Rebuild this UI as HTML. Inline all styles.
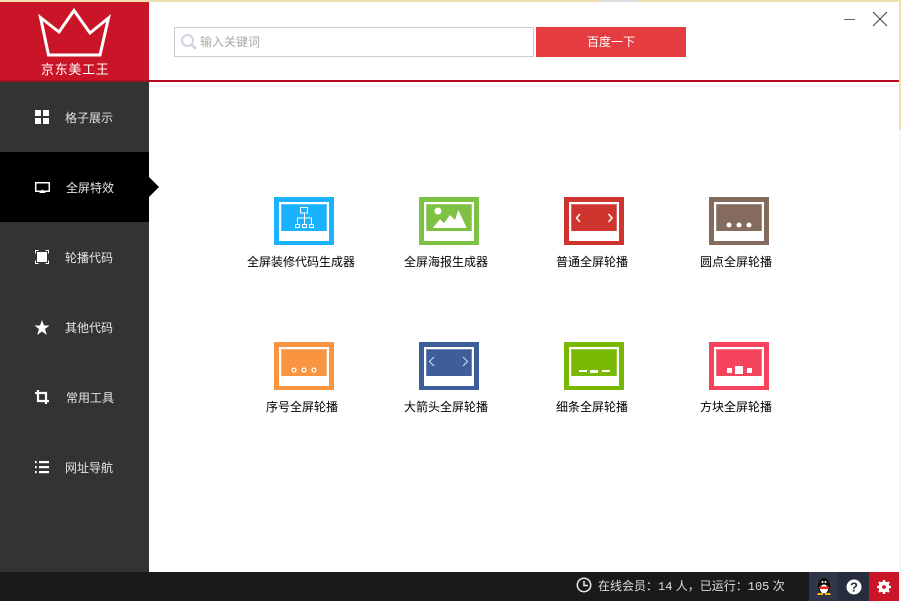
<!DOCTYPE html>
<html lang="zh"><head><meta charset="utf-8"><title>京东美工王</title>
<style>
*{margin:0;padding:0;box-sizing:border-box}
html,body{width:901px;height:601px;overflow:hidden;background:#f7f7f7}
body{position:relative;font:12px "WenQuanYi Zen Hei","Liberation Sans","Noto Sans CJK SC",sans-serif}
.a{position:absolute}
#top{left:0;top:0;width:901px;height:2px;background:#f0e0b0}
#topg{left:600px;top:0;width:37px;height:2px;background:#ddd}
#rs{left:899px;top:0;width:2px;height:130px;background:#f0e0b0}
#win{left:0;top:2px;width:899px;height:599px;background:#fff}
#logo{left:0;top:2px;width:149px;height:78px;background:#c91527}
#ln{left:149px;top:80px;width:750px;height:2px;background:#b8091c}
#ll{left:0;top:80px;width:149px;height:2px;background:#a5121f}
#side{left:0;top:82px;width:149px;height:490px;background:#333}
#act{left:0;top:152px;width:149px;height:70px;background:#000}
#arr{left:149px;top:177px;width:0;height:0;border-left:10px solid #000;border-top:10px solid transparent;border-bottom:10px solid transparent}
.m{left:65px;width:60px;color:#e4e4e4;line-height:14px;white-space:nowrap}
.mi{left:34px;width:16px;height:16px}
#lt{left:41px;top:62px;width:72px;color:#fff;font-size:13px;letter-spacing:.7px;line-height:15px;white-space:nowrap}
#search{left:174px;top:27px;width:360px;height:30px;border:1px solid #ccc;background:#fff}
#ph{left:200px;top:35px;color:#a8a8a8;line-height:14px}
#btn{left:536px;top:27px;width:150px;height:30px;background:#e53c3f;color:#fff;text-align:center;line-height:30px}
.t{width:60px;height:48px}
.t i{position:absolute;left:5px;top:5px;width:50px;height:39px;background:#fff}
.t b{position:absolute;left:7px;top:7px;width:46px;height:27px;border:1px solid rgba(255,255,255,.25);border-bottom:0}
.t svg{position:absolute;left:0;top:0}
.c{width:130px;text-align:center;color:#000;line-height:14px;white-space:nowrap}
#bar{left:0;top:572px;width:899px;height:29px;background:#1a1a1a}
#st{left:598px;top:579px;color:#ddd;line-height:14px;white-space:nowrap}
#st span{font-family:"Liberation Mono",monospace}
</style></head><body>
<div class="a" id="top"></div><div class="a" id="topg"></div><div class="a" id="rs"></div>
<div class="a" id="win"></div>
<div class="a" id="logo"></div><div class="a" id="ll"></div><div class="a" id="ln"></div>
<svg class="a" style="left:30px;top:0" width="90" height="62"><path d="M10.500 17.500 29 32 44 10.500 60 33 78.500 18 70 55H18.500Z" fill="none" stroke="#fff" stroke-width="3"/></svg>
<div class="a" id="lt">京东美工王</div>

<div class="a" id="search"></div>
<svg class="a" style="left:180px;top:33px" width="18" height="18"><circle cx="7.500" cy="7.500" r="5.500" fill="none" stroke="#cdd5e2" stroke-width="2"/><path d="M11.500 11.500 16 16" stroke="#cdd5e2" stroke-width="2.500"/></svg>
<div class="a" id="ph">输入关键词</div>
<div class="a" id="btn">百度一下</div>
<svg class="a" style="left:840px;top:8px" width="50" height="22"><path d="M4 11.500H15" stroke="#666" stroke-width="1"/><path d="M33 4 47 18M47 4 33 18" stroke="#4a5060" stroke-width="1.200"/></svg>

<div class="a" id="side"></div><div class="a" id="act"></div><div class="a" id="arr"></div>
<svg class="a mi" style="top:109px" viewBox="0 0 16 16" fill="#fff"><rect x="1" y="1" width="6" height="6"/><rect x="9" y="1" width="6" height="6"/><rect x="1" y="9" width="6" height="6"/><rect x="9" y="9" width="6" height="6"/></svg>
<div class="a m" style="top:111px">格子展示</div>
<svg class="a mi" style="top:180px" viewBox="0 0 16 16"><path d="M1.700 2.700H15.300V11.300H1.700Z" fill="none" stroke="#fff" stroke-width="1.500"/><path d="M5 13 8.500 9.500 12 13Z" fill="#fff"/></svg>
<div class="a m" style="top:181px;left:66px">全屏特效</div>
<svg class="a mi" style="top:249px" viewBox="0 0 16 16"><rect x="3" y="3" width="10" height="10" fill="#fff"/><path d="M1.500 4.500V1.500H4.500M11.500 1.500H14.500V4.500M14.500 11.500V14.500H11.500M4.500 14.500H1.500V11.500" fill="none" stroke="#fff"/></svg>
<div class="a m" style="top:251px">轮播代码</div>
<svg class="a mi" style="top:320px" viewBox="0 0 16 16"><path d="M8 0 10 5.500H15.500L11 9 12.800 15 8 11.500 3.200 15 5 9 .5 5.500H6Z" fill="#fff"/></svg>
<div class="a m" style="top:321px">其他代码</div>
<svg class="a mi" style="top:390px" viewBox="0 0 16 16"><path d="M4 0V11H15M1 3H12V14" fill="none" stroke="#fff" stroke-width="2.200"/></svg>
<div class="a m" style="top:391px;left:66px">常用工具</div>
<svg class="a mi" style="top:460px" viewBox="0 0 16 16" fill="#fff"><rect x="1" y="1" width="1.700" height="2.200"/><rect x="1" y="6" width="1.700" height="2.200"/><rect x="1" y="11" width="1.700" height="2.200"/><rect x="5" y="1" width="10" height="2.200"/><rect x="5" y="6" width="10" height="2.200"/><rect x="5" y="11" width="10" height="2.200"/></svg>
<div class="a m" style="top:461px">网址导航</div>

<div class="a t" style="left:274px;top:197px;background:#1ab2ff"><i></i><b style="background:#1ab2ff"></b>
<svg width="60" height="48" fill="none" stroke="#fff"><path d="M26.500 10.500h7v5.500h-7zM30.500 16v5M23.500 27v-6h14v6M30.500 21v6M21.500 27.500h4v3h-4zM28.500 27.500h4v3h-4zM35.500 27.500h4v3h-4z"/></svg></div>
<div class="a t" style="left:419px;top:197px;background:#7dc242"><i></i><b style="background:#7dc242"></b>
<svg width="60" height="48" fill="#fff"><circle cx="19" cy="14" r="3.500"/><path d="M13.700 31 21 22.300 25 26.300 31 18 36 23 39.300 13 47.700 31Z"/></svg></div>
<div class="a t" style="left:564px;top:197px;background:#cf342f"><i></i><b style="background:#cf342f"></b>
<svg width="60" height="48" fill="none" stroke="#fff" stroke-width="1.500"><path d="M16 17 12.500 21 16 25M44.500 17 48 21 44.500 25"/></svg></div>
<div class="a t" style="left:709px;top:197px;background:#856b5d"><i></i><b style="background:#856b5d"></b>
<svg width="60" height="48" fill="#fff"><circle cx="20" cy="28" r="2.500"/><circle cx="30" cy="28" r="2.500"/><circle cx="40" cy="28" r="2.500"/></svg></div>

<div class="a c" style="left:236px;top:255px">全屏装修代码生成器</div>
<div class="a c" style="left:381px;top:255px">全屏海报生成器</div>
<div class="a c" style="left:527px;top:255px">普通全屏轮播</div>
<div class="a c" style="left:671px;top:255px">圆点全屏轮播</div>

<div class="a t" style="left:274px;top:342px;background:#f99441"><i></i><b style="background:#f99441"></b>
<svg width="60" height="48" fill="none" stroke="#fff" stroke-width="1.200"><circle cx="20" cy="28" r="2"/><circle cx="30" cy="28" r="2"/><circle cx="40" cy="28" r="2"/></svg></div>
<div class="a t" style="left:419px;top:342px;background:#3d5e9b"><i></i><b style="background:#3d5e9b"></b>
<svg width="60" height="48" fill="none" stroke="#c8d2e6" stroke-width="1.200"><path d="M15 15 10.500 19.500 15 24M44 15 48.500 19.500 44 24"/></svg></div>
<div class="a t" style="left:564px;top:342px;background:#78b800"><i></i><b style="background:#78b800"></b>
<svg width="60" height="48" fill="#fff"><rect x="15" y="28" width="8" height="2"/><rect x="26" y="28" width="8" height="3"/><rect x="38" y="28" width="8" height="2"/></svg></div>
<div class="a t" style="left:709px;top:342px;background:#f5425d"><i></i><b style="background:#f5425d"></b>
<svg width="60" height="48" fill="#fff"><rect x="18" y="26" width="5" height="5"/><rect x="26" y="24" width="8" height="8"/><rect x="38" y="26" width="5" height="5"/></svg></div>

<div class="a c" style="left:237px;top:400px">序号全屏轮播</div>
<div class="a c" style="left:381px;top:400px">大箭头全屏轮播</div>
<div class="a c" style="left:527px;top:400px">细条全屏轮播</div>
<div class="a c" style="left:671px;top:400px">方块全屏轮播</div>

<div class="a" id="bar"></div>
<svg class="a" style="left:576px;top:577px" width="16" height="16" fill="none" stroke="#eee" stroke-width="1.500"><circle cx="8" cy="8" r="6.700"/><path d="M8 4V8.500H12"/></svg>
<div class="a" id="st">在线会员：<span>14</span> 人，已运行：<span>105</span> 次</div>
<div class="a" style="left:809px;top:572px;width:29px;height:29px;background:#2f3647"></div>
<div class="a" style="left:838px;top:572px;width:31px;height:29px;background:#262e3d"></div>
<div class="a" style="left:869px;top:572px;width:30px;height:29px;background:#c91527"></div>
<svg class="a" style="left:814px;top:577px" width="20" height="20"><ellipse cx="10" cy="9" rx="6" ry="8" fill="#111"/><ellipse cx="10" cy="12" rx="4" ry="4.500" fill="#fff"/><path d="M5 9.500H15V12H5Z" fill="#e0281e"/><path d="M3 18H9V16H4ZM11 16V18H17L16 16Z" fill="#f5b21a"/><circle cx="8.500" cy="5" r="1" fill="#fff"/><circle cx="11.500" cy="5" r="1" fill="#fff"/></svg>
<svg class="a" style="left:846px;top:579px" width="16" height="16"><circle cx="8" cy="8" r="7.500" fill="#fff"/><text x="8" y="12.500" text-anchor="middle" font-family="Liberation Sans" font-size="13" font-weight="700" fill="#262e3d">?</text></svg>
<svg class="a" style="left:877px;top:580px" width="14" height="14" viewBox="0 0 16 16"><circle cx="8" cy="8" r="4.500" fill="none" stroke="#fff" stroke-width="3.500"/><path d="M8 0V16M0 8H16M2.300 2.300 13.700 13.700M13.700 2.300 2.300 13.700" stroke="#fff" stroke-width="2.600"/><circle cx="8" cy="8" r="2.200" fill="#c91527"/></svg>
</body></html>
